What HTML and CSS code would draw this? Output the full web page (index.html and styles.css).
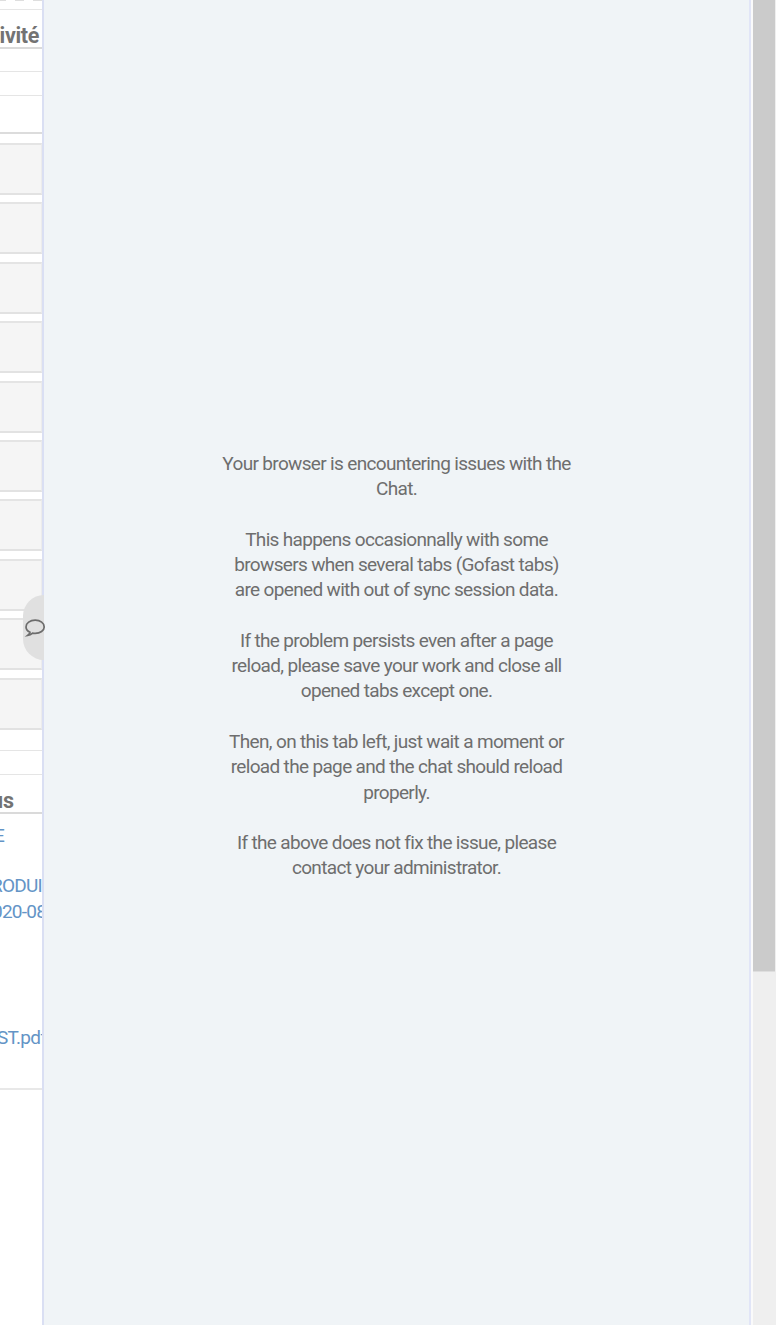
FILE: index.html
```html
<!DOCTYPE html>
<html lang="en">
<head>
<meta charset="utf-8">
<title>Chat</title>
<link rel="stylesheet" href="styles.css">
</head>
<body>
<div class="app">
  <aside class="activity">
    <div class="dashes"></div>
    <h2 class="heading heading-activity"><span class="ivite">ivité</span></h2>
    <div class="rule r1"></div>
    <div class="rule r2"></div>
    <div class="rule r3"></div>
    <div class="cards">
      <div class="card"></div><div class="card"></div><div class="card"></div><div class="card"></div><div class="card"></div>
      <div class="card"></div><div class="card"></div><div class="card"></div><div class="card"></div><div class="card"></div>
    </div>
    <div class="rule r4"></div>
    <div class="rule r5"></div>
    <h2 class="heading heading-docs"><span class="us">us</span></h2>
    <div class="links">
      <a class="link-e">E</a>
      <a class="link-produit">RODUI</a>
      <a class="link-date">020-08</a>
      <a class="link-pdf">ST.pdf</a>
    </div>
  </aside>
  <main class="chat">
    <div class="message">
      <p>Your browser is encountering issues with the<br>Chat.</p>
      <p>This happens occasionnally with some<br>browsers when several tabs (Gofast tabs)<br>are opened with out of sync session data.</p>
      <p>If the problem persists even after a page<br>reload, please save your work and close all<br>opened tabs except one.</p>
      <p>Then, on this tab left, just wait a moment or<br>reload the page and the chat should reload<br>properly.</p>
      <p>If the above does not fix the issue, please<br>contact your administrator.</p>
    </div>
  </main>
  <div class="scrollbar"><div class="thumb"></div></div>
  <div class="chat-tab">
    <svg class="bubble" viewBox="0 0 20 18"><path d="M5 13.2C2.500 12 1 10.100 1 7.900C1 4.200 5 1.200 10.200 1.200S19.200 4.200 19.200 7.900S15.200 14.400 10.200 14.400C9.300 14.400 8.400 14.300 7.600 14.100C6.200 15.400 4.500 16.300 2.600 16.500C3.800 15.600 4.700 14.600 5 13.200Z"/></svg>
  </div>
</div>
</body>
</html>
```
FILE: styles.css
```css
* { box-sizing: border-box; }
body { margin: 0; font-family: Roboto, "Liberation Sans", sans-serif; }
.app { position: relative; display: flex; width: 776px; height: 1325px; overflow: hidden; background: #fff; }
.activity { width: 42px; overflow: hidden; background: #fff; }
.dashes { height: 10px; border-bottom: 1px solid #e6e6e6; background: repeating-linear-gradient(90deg, #dedede 0 6px, #fff 6px 15px, #dedede 15px 24px, #fff 24px 33px, #dedede 33px 42px) 0 0 / 42px 1px no-repeat; }
.heading { margin: 0; font-size: 21.500px; font-weight: 700; color: #737373; white-space: nowrap; }
.heading span { display: block; }
.heading-activity { height: 39px; padding-top: 14px; line-height: 24px; border-bottom: 2px solid #dadada; }
.ivite { margin-left: -0.5px; letter-spacing: -0.3px; }
.rule { border-bottom: 1px solid #e5e5e5; }
.r1 { height: 23px; }
.r2 { height: 24px; }
.r3 { height: 38px; border-bottom: 2px solid #dcdcdc; }
.cards { display: flex; flex-direction: column; gap: 7.4px; height: 595.5px; padding-top: 9px; }
.card { flex: 1; border-top: 2px solid #e4e4e4; border-bottom: 2px solid #e2e2e2; border-right: 1px solid #ececec; background: #f5f5f5; }
.r4 { height: 21.5px; }
.r5 { height: 24px; }
.heading-docs { height: 39px; padding-top: 14px; line-height: 24px; border-bottom: 2px solid #dadada; }
.us { margin-left: -9px; }
.links { height: 276px; border-bottom: 2px solid #e8e8e8; padding-top: 9px; }
.links a { display: block; height: 25px; line-height: 25px; font-size: 19px; letter-spacing: -0.75px; color: #6394c6; white-space: nowrap; }
.links .link-e { margin-left: -6px; }
.links .link-produit { margin: 25px 0 0 -9px; }
.links .link-date { margin: 1px 0 0 -8px; }
.links .link-pdf { margin: 101px 0 0 -3px; }
.chat { width: 709px; border-left: 2px solid #dadff3; border-right: 2px solid #e1e5f7; background: #f0f4f7; padding-top: 450.700px; }
.message { color: #6e6e6e; font-size: 19px; line-height: 25.3px; letter-spacing: -0.66px; text-align: center; white-space: nowrap; }
.message p { margin: 0 0 25.3px; }
.scrollbar { width: 25px; border-left: 2px solid #fafafa; background: #efefef; }
.thumb { width: 22px; height: 972px; background: #cbcbcb; border-bottom: 1px solid #dedede; }
.chat-tab { position: absolute; left: 23px; top: 595px; width: 21px; height: 65px; border-radius: 21px 0 0 21px; background: #e0e0e0; }
.bubble { display: block; width: 20px; height: 18px; margin: 24px 0 0 2px; overflow: visible; fill: none; stroke: #6c6c6c; stroke-width: 1.7; }
```
